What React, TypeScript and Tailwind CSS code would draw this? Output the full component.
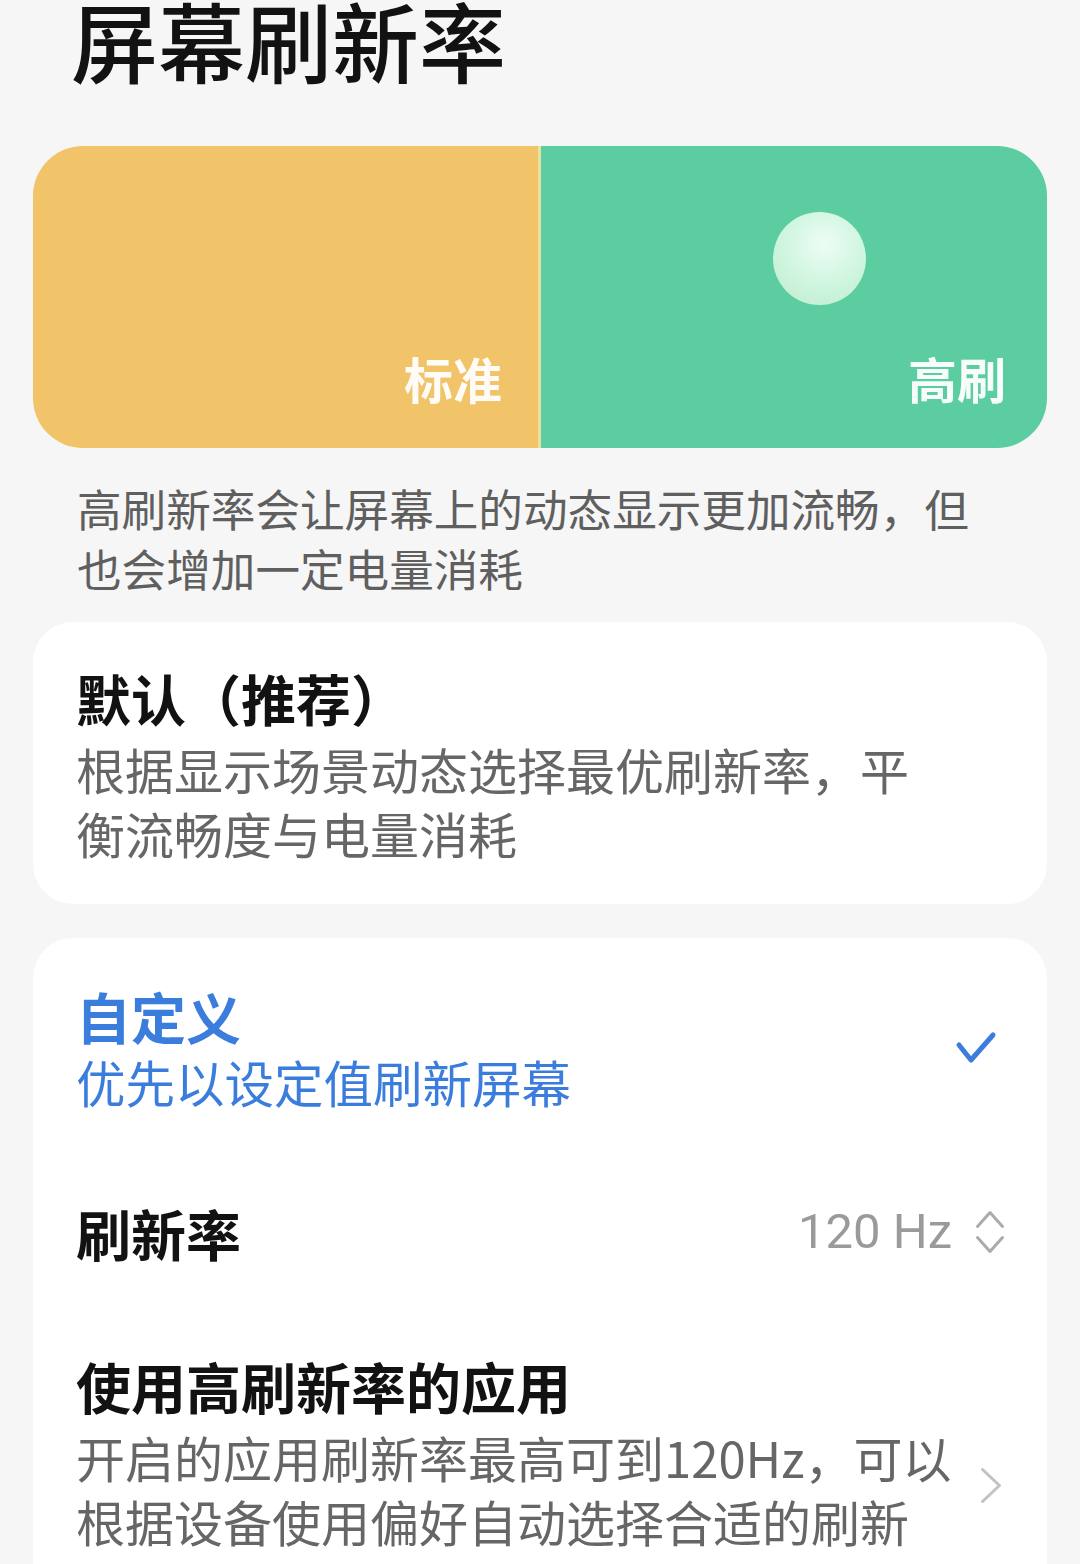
import React from "react";

// two-panel mode switch: standard (yellow) / high refresh (green)
const ModeSwitch = () => (
  <div className="mt-[68px] flex h-[302px] overflow-hidden rounded-[50px]">
    <div className="flex w-[505px] flex-col items-end justify-end bg-[#f2c469] pb-[46px] pr-[36px]">
      <span className="text-[49px] font-semibold leading-[49px] text-white/95">标准</span>
    </div>
    <div className="w-[3px] bg-[#eadfa6]" />
    <div className="flex flex-1 flex-col bg-[#5ccda1]">
      <div className="ml-[232px] mt-[66px] h-[93px] w-[93px] rounded-full bg-[radial-gradient(circle_at_55%_35%,#eefdf4_0%,#d2f6e2_45%,#bcedcc_100%)]" />
      <span className="mb-[46px] mr-[41px] mt-auto self-end text-[49px] font-semibold leading-[49px] text-white/95">
        高刷
      </span>
    </div>
  </div>
);

export default function App() {
  return (
    <div className="h-[1564px] overflow-hidden bg-[#f6f6f6] px-[33px] font-['Noto_Sans_CJK_SC',sans-serif]">
      <h1 className="pl-[38px] text-[87px] font-medium leading-[78px] text-[#121212]">屏幕刷新率</h1>

      <ModeSwitch />

      <p className="mt-[30px] whitespace-nowrap pl-[44px] text-[44.6px] leading-[60px] text-[#5f5f5f]">
        高刷新率会让屏幕上的动态显示更加流畅，但
        <br />
        也会增加一定电量消耗
      </p>

      {/* Default option */}
      <div className="mt-[24px] rounded-[40px] bg-white pb-[39px] pl-[43px] pt-[43px]">
        <div className="text-[55px] font-semibold leading-[64px] text-[#121212]">默认（推荐）</div>
        <div className="mt-[8px] whitespace-nowrap text-[49px] leading-[64px] text-[#666]">
          根据显示场景动态选择最优刷新率，平
          <br />
          衡流畅度与电量消耗
        </div>
      </div>

      {/* Custom option */}
      <div className="mt-[34px] rounded-t-[40px] bg-white pl-[43px] pt-[45px]">
        <div className="flex items-center">
          <div className="flex-1">
            <div className="text-[55px] font-semibold leading-[64px] text-[#3b7ddd]">自定义</div>
            <div className="mt-[3px] text-[49.5px] leading-[64px] text-[#3b7ddd]">优先以设定值刷新屏幕</div>
          </div>
          <svg width="44" height="38" viewBox="0 0 44 38" className="mr-[48px]">
            <path
              d="M4 15L16 30L38 5"
              fill="none"
              stroke="#3b7ddd"
              strokeWidth="5"
              strokeLinecap="round"
              strokeLinejoin="round"
            />
          </svg>
        </div>

        <div className="mt-[86px] flex items-center">
          <div className="flex-1 text-[55px] font-semibold leading-[64px] text-[#121212]">刷新率</div>
          <span className="font-['Roboto',sans-serif] text-[49px] leading-[64px] text-[#9a9a9a]">120 Hz</span>
          <svg width="32" height="50" viewBox="0 0 32 50" className="ml-[22px] mr-[41px]">
            <path
              d="M3.5 19.5L16 5.5L28.5 19.5M3.5 30.5L16 44.5L28.5 30.5"
              fill="none"
              stroke="#ababab"
              strokeWidth="3"
              strokeLinecap="round"
              strokeLinejoin="round"
            />
          </svg>
        </div>

        <div className="mt-[89px] flex items-center">
          <div className="flex-1">
            <div className="text-[55px] font-semibold leading-[64px] text-[#121212]">使用高刷新率的应用</div>
            <div className="mt-[8px] whitespace-nowrap text-[49px] leading-[64px] text-[#666]">
              开启的应用刷新率最高可到120Hz，可以
              <br />
              根据设备使用偏好自动选择合适的刷新
              <br />
              率
            </div>
          </div>
          <svg width="24" height="41" viewBox="0 0 24 41" className="mr-[44px]">
            <path
              d="M3.5 4.5L20.5 20.5L3.5 36.5"
              fill="none"
              stroke="#c2c2c2"
              strokeWidth="3"
              strokeLinecap="round"
              strokeLinejoin="round"
            />
          </svg>
        </div>
      </div>
    </div>
  );
}
